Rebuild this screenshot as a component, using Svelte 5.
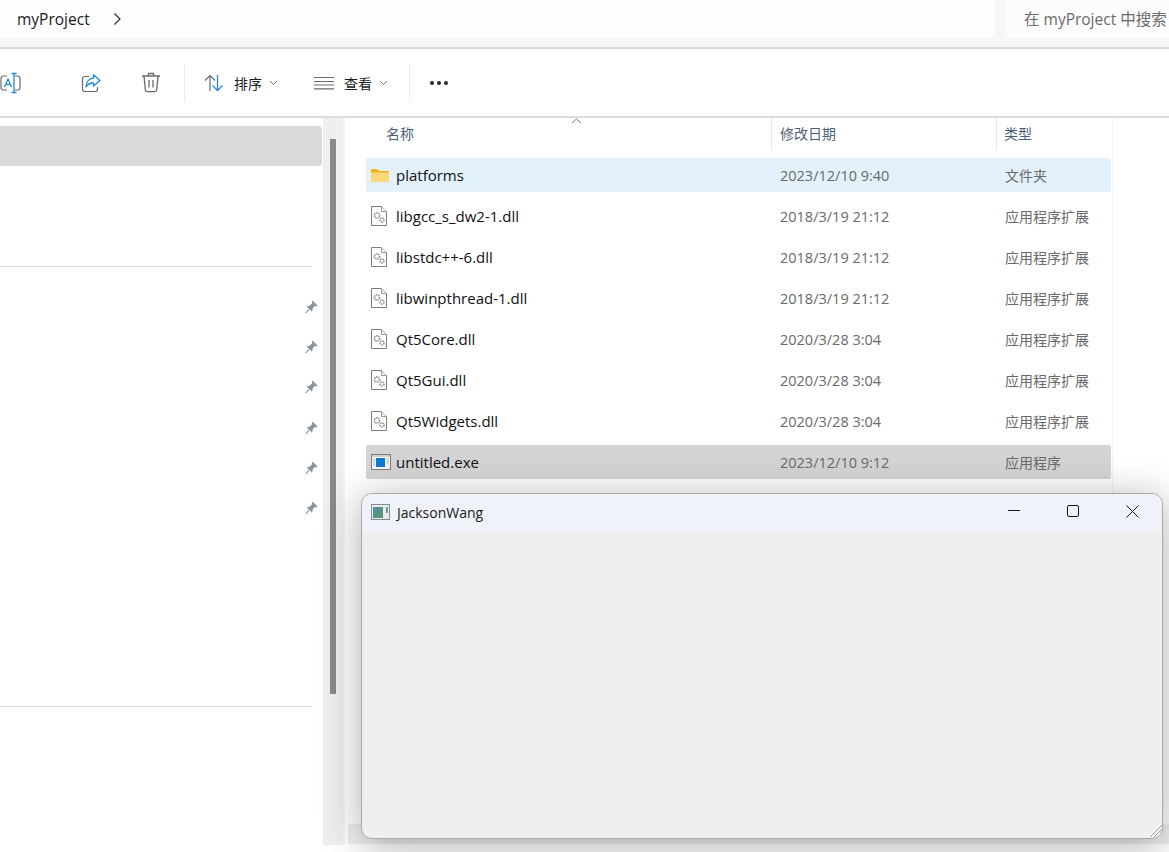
<script>
  const files = [
    { name: 'platforms', date: '2023/12/10 9:40', type: '文件夹', icon: 'folder', state: 'hover' },
    { name: 'libgcc_s_dw2-1.dll', date: '2018/3/19 21:12', type: '应用程序扩展', icon: 'dll' },
    { name: 'libstdc++-6.dll', date: '2018/3/19 21:12', type: '应用程序扩展', icon: 'dll' },
    { name: 'libwinpthread-1.dll', date: '2018/3/19 21:12', type: '应用程序扩展', icon: 'dll' },
    { name: 'Qt5Core.dll', date: '2020/3/28 3:04', type: '应用程序扩展', icon: 'dll' },
    { name: 'Qt5Gui.dll', date: '2020/3/28 3:04', type: '应用程序扩展', icon: 'dll' },
    { name: 'Qt5Widgets.dll', date: '2020/3/28 3:04', type: '应用程序扩展', icon: 'dll' },
    { name: 'untitled.exe', date: '2023/12/10 9:12', type: '应用程序', icon: 'exe', state: 'selected' },
  ];
  const pins = [0, 1, 2, 3, 4, 5];
</script>

{#snippet gear(cx, cy, r)}
  <circle {cx} {cy} r={r} fill="none" stroke="#8d8d8d" stroke-width="1.6" stroke-dasharray="1.4 0.8" />
{/snippet}

{#snippet chevron()}
  <svg class="chev" width="9" height="6" viewBox="0 0 9 6"><path d="M1 1l3.5 3.5L8 1" fill="none" stroke="#7a7a7a" /></svg>
{/snippet}

<div class="explorer">
  <header class="topbar">
    <div class="address">
      <span class="crumb">myProject</span>
      <svg class="crumb-sep" width="9" height="14" viewBox="0 0 9 14"><path d="M1.5 1.5L7 7l-5.500 5.500" fill="none" stroke="#2b2b2b" stroke-width="1.200" /></svg>
    </div>
    <div class="search">在 myProject 中搜索</div>
  </header>

  <div class="toolbar">
    <button class="tool first" aria-label="重命名">
      <svg width="22" height="22" viewBox="0 0 22 22">
        <path d="M7 4H3.500A2.500 2.500 0 0 0 1 6.500v9A2.500 2.500 0 0 0 3.500 18H7M15 4h2.500A2.500 2.500 0 0 1 20 6.500v9a2.500 2.500 0 0 1-2.500 2.500H15" fill="none" stroke="#6b6b6b" stroke-width="1.200" />
        <path d="M4.500 15L8 7l3.500 8M5.800 12.300h4.400" fill="none" stroke="#1e88e0" stroke-width="1.200" />
        <path d="M11.500 1.500h5M14 1.500v19M11.500 20.500h5" fill="none" stroke="#1e88e0" stroke-width="1.300" />
      </svg>
    </button>
    <button class="tool" aria-label="共享">
      <svg width="20" height="20" viewBox="0 0 20 20">
        <path d="M8 3.500H4A2.500 2.500 0 0 0 1.500 6v10A2.500 2.500 0 0 0 4 18.500h10a2.500 2.500 0 0 0 2.500-2.500v-2" fill="none" stroke="#6b6b6b" stroke-width="1.200" />
        <path d="M12.500 1.800L19 7.500l-6.500 5.500V10C9 10 6.500 11 5 14c0-5 3-8.500 7.500-9z" fill="none" stroke="#1e88e0" stroke-width="1.300" stroke-linejoin="round" />
      </svg>
    </button>
    <button class="tool" aria-label="删除">
      <svg width="20" height="21" viewBox="0 0 20 21">
        <path d="M1 4h18M7 4l.6-2.500h4.800L13 4M3 4l1.300 14a2 2 0 0 0 2 1.700h7.400a2 2 0 0 0 2-1.700L17 4M8 8v7.500M12 8v7.500" fill="none" stroke="#6b6b6b" stroke-width="1.300" />
      </svg>
    </button>
    <span class="divider"></span>
    <button class="menu sort">
      <svg width="20" height="18" viewBox="0 0 20 18">
        <path d="M6 17V1.500M1 6.500l5-5 5 5" fill="none" stroke="#6b6b6b" stroke-width="1.200" />
        <path d="M13.500 1v15.500M8.500 11.500l5 5 5-5" fill="none" stroke="#1e88e0" stroke-width="1.300" />
      </svg>
      <span class="menu-label">排序</span>
      {@render chevron()}
    </button>
    <button class="menu view">
      <svg width="20" height="14" viewBox="0 0 20 14">
        <path d="M0 1.500h20M0 5.500h20M0 9h20M0 12.800h20" fill="none" stroke="#6b6b6b" stroke-width="1.200" />
      </svg>
      <span class="menu-label">查看</span>
      {@render chevron()}
    </button>
    <span class="divider second"></span>
    <div class="dots"><i></i><i></i><i></i></div>
  </div>

  <div class="body">
    <aside class="nav">
      <div class="nav-selected"></div>
      <hr class="nav-line first-line" />
      <div class="pins">
        {#each pins as p}
          <svg class="pin" width="13" height="14" viewBox="0 0 13 14" data-pin={p}>
            <path d="M7.500 0.500L12.500 5.500 11 6.500 9.500 6 7.500 8.800 7.500 11 6.800 11.500 1.800 6.500 2.500 6 4.500 5.800 7 3.500 6.800 2z" fill="#8a949c" />
            <path d="M4 9L0.800 13" stroke="#8a949c" stroke-width="1.200" />
          </svg>
        {/each}
      </div>
      <hr class="nav-line" />
    </aside>

    <div class="nav-scroll"><div class="nav-thumb"></div></div>

    <main class="list">
      <div class="columns">
        <div class="col col-name">名称
          <svg class="sort-caret" width="11" height="6" viewBox="0 0 11 6"><path d="M1 5l4.500-4L10 5" fill="none" stroke="#7a7a7a" /></svg>
        </div>
        <div class="col col-date">修改日期</div>
        <div class="col col-type">类型</div>
      </div>
      <div class="rows">
        {#each files as f}
          <div class="row {f.state ?? ''}">
            <span class="file-icon">
              {#if f.icon === 'folder'}
                <svg width="18" height="14" viewBox="0 0 18 14">
                  <path d="M0 2a1 1 0 0 1 1-1h5l2 2h9a1 1 0 0 1 1 1v1H0z" fill="#f5b014" />
                  <path d="M0 4.500h18V13a1 1 0 0 1-1 1H1a1 1 0 0 1-1-1z" fill="#fdd878" />
                </svg>
              {:else if f.icon === 'dll'}
                <svg width="16" height="20" viewBox="0 0 16 20">
                  <path d="M.5.500h10l5 5v14H.5z" fill="#fff" stroke="#7d7d7d" />
                  <path d="M10.500.500v5h5" fill="#f2f2f2" stroke="#9a9a9a" />
                  {@render gear(6, 9.500, 2.600)}
                  {@render gear(11, 14, 2)}
                </svg>
              {:else}
                <svg width="20" height="16" viewBox="0 0 20 16">
                  <rect x=".5" y=".5" width="19" height="15" fill="#f4f4f4" stroke="#7d7d7d" />
                  <path d="M1 1h18v2H1z" fill="#d0d0d0" />
                  <rect x="5" y="4" width="9" height="9" fill="#0f78d0" />
                  <path d="M2 5h2M2 7h2M2 9h2M2 11h2M15.500 5h2.500M15.500 7h2.500M15.500 9h2.500" stroke="#b5b5b5" />
                </svg>
              {/if}
            </span>
            <span class="name">{f.name}</span>
            <span class="date">{f.date}</span>
            <span class="type">{f.type}</span>
          </div>
        {/each}
      </div>
    </main>
  </div>

  <div class="hscroll"></div>

  <section class="window">
    <div class="titlebar">
      <svg class="app-icon" width="19" height="16" viewBox="0 0 19 16">
        <defs>
          <linearGradient id="appfill" x1="0" y1="0" x2="1" y2="1">
            <stop offset="0" stop-color="#4f8fa0" />
            <stop offset="1" stop-color="#5d9a70" />
          </linearGradient>
        </defs>
        <rect x=".5" y=".5" width="18" height="15" fill="#e9ecef" stroke="#8a8a8a" />
        <rect x="2" y="3" width="10" height="11" fill="url(#appfill)" />
        <rect x="15" y="3" width="2" height="6" fill="#6f9a94" />
      </svg>
      <span class="title">JacksonWang</span>
      <div class="controls">
        <svg width="12" height="12" viewBox="0 0 12 12"><path d="M0 5.500h12" stroke="#1a1a1a" /></svg>
        <svg width="12" height="12" viewBox="0 0 12 12"><rect x=".5" y=".5" width="11" height="11" rx="1.500" fill="none" stroke="#1a1a1a" /></svg>
        <svg width="13" height="13" viewBox="0 0 13 13"><path d="M.5.500l12 12M12.500.500l-12 12" stroke="#1a1a1a" /></svg>
      </div>
    </div>
    <svg class="grip" width="14" height="14" viewBox="0 0 14 14">
      <path d="M13 1L1 13M13 5L5 13M13 9L9 13" stroke="#fff" stroke-width="1.500" />
      <path d="M14 1L2 13M14 5L6 13M14 9L10 13" stroke="#9a9a9a" />
    </svg>
  </section>
</div>

<style>
  :global(body) {
    margin: 0;
    background: #fff;
    font-family: "Open Sans", "Noto Sans CJK SC", sans-serif;
  }
  .explorer {
    position: relative;
    width: 1169px;
    height: 852px;
    overflow: hidden;
    background: #fff;
  }
  button {
    border: none;
    background: none;
    padding: 0;
    font: inherit;
    color: inherit;
  }

  .topbar {
    display: flex;
    gap: 10px;
    height: 48px;
    background: #f7f7f7;
    border-bottom: 2px solid #dcdcdc;
    box-sizing: content-box;
    height: 47px;
  }
  .address {
    width: 995px;
    height: 38px;
    background: #fdfdfd;
    border-radius: 0 0 5px 0;
    display: flex;
    align-items: center;
    padding-left: 17px;
    box-sizing: border-box;
  }
  .crumb {
    font-size: 15.500px;
    color: #1c1c1c;
  }
  .crumb-sep { margin-left: 23px; }
  .search {
    flex: 1;
    height: 38px;
    background: #fcfcfc;
    border-radius: 0 0 0 5px;
    padding-left: 19px;
    font-size: 15.500px;
    line-height: 38px;
    color: #6b6b6b;
    white-space: nowrap;
    overflow: hidden;
  }

  .toolbar {
    height: 67px;
    display: flex;
    align-items: center;
    border-bottom: 2px solid #dcdcdc;
  }
  .tool {
    width: 60px;
    display: flex;
    justify-content: center;
  }
  .tool.first {
    width: 22px;
    margin-right: 39px;
  }
  .divider {
    width: 1px;
    height: 38px;
    background: #ececec;
    margin-left: 3px;
  }
  .divider.second { margin-left: 21px; }
  .menu {
    display: flex;
    align-items: center;
  }
  .sort { margin-left: 19px; }
  .view { margin-left: 36px; }
  .menu-label {
    font-size: 14px;
    color: #1c1c1c;
    margin-left: 10px;
  }
  .chev { margin-left: 7px; }
  .dots {
    display: flex;
    gap: 3px;
    margin-left: 20px;
  }
  .dots i {
    width: 4px;
    height: 4px;
    border-radius: 50%;
    background: #2a2a2a;
  }

  .body {
    display: flex;
    height: 727px;
  }
  .nav {
    width: 323px;
    flex-shrink: 0;
    padding-top: 8px;
    box-sizing: border-box;
  }
  .nav-selected {
    width: 322px;
    height: 40px;
    background: #d9d9d9;
    border-radius: 0 4px 4px 0;
  }
  .nav-line {
    width: 312px;
    margin: 0;
    border: none;
    border-top: 1px solid #dadada;
  }
  .first-line { margin-top: 100px; }
  .pins {
    display: flex;
    flex-direction: column;
    gap: 26.200px;
    align-items: flex-end;
    height: 439px;
    padding: 33px 5px 0 0;
    box-sizing: border-box;
  }
  .nav-scroll {
    width: 20px;
    flex-shrink: 0;
    background: #efefef;
    padding-top: 21px;
    box-sizing: border-box;
  }
  .nav-thumb {
    width: 6px;
    height: 555px;
    margin-left: 7px;
    background: #8a8a8a;
  }

  .list {
    flex: 1;
    padding-left: 2px;
    position: relative;
  }
  .list::before {
    content: "";
    position: absolute;
    left: 0;
    top: 0;
    bottom: 0;
    width: 2px;
    background: #f4f4f4;
  }
  .list::after {
    content: "";
    position: absolute;
    left: 769px;
    top: 0;
    bottom: 0;
    width: 1px;
    background: #f2f2f2;
  }
  .columns {
    display: flex;
    height: 32px;
    margin-left: 21px;
    font-size: 14px;
    color: #4d5f75;
  }
  .col {
    line-height: 32px;
    box-sizing: border-box;
  }
  .col-name {
    position: relative;
    width: 406px;
    padding-left: 20px;
    border-right: 1px solid #e6e6e6;
  }
  .sort-caret {
    position: absolute;
    left: 205px;
    top: 0;
  }
  .col-date {
    width: 225px;
    padding-left: 8px;
    border-right: 1px solid #e6e6e6;
  }
  .col-type { padding-left: 7px; }
  .rows {
    display: flex;
    flex-direction: column;
    gap: 7px;
    margin: 8px 0 0 21px;
    width: 745px;
  }
  .row {
    display: flex;
    align-items: center;
    height: 34px;
    font-size: 14px;
    border-radius: 2px;
  }
  .row.hover { background: #e3f1fc; }
  .row.selected { background: #d4d4d4; }
  .file-icon {
    width: 30px;
    display: flex;
    justify-content: flex-start;
    padding-left: 5px;
    box-sizing: border-box;
    flex-shrink: 0;
  }
  .name {
    width: 384px;
    font-size: 15px;
    color: #111;
  }
  .date {
    width: 225px;
    color: #6a6a6a;
    font-size: 14.500px;
  }
  .type { color: #6a6a6a; }

  .hscroll {
    position: absolute;
    left: 348px;
    right: 0;
    top: 824px;
    height: 20px;
    background: #efefef;
  }

  .window {
    position: absolute;
    left: 361px;
    top: 493px;
    width: 802px;
    height: 346px;
    background: #efefef;
    border: 1px solid #ababab;
    box-sizing: border-box;
    border-radius: 11px;
    box-shadow: 0 6px 40px rgba(0, 0, 0, 0.32);
    overflow: hidden;
  }
  .titlebar {
    height: 37px;
    background: #eff2f9;
    display: flex;
    align-items: center;
    padding-left: 9px;
  }
  .app-icon { margin-top: -2px; }
  .title {
    margin-left: 7px;
    font-size: 14px;
    color: #1a1a1a;
  }
  .controls {
    margin-left: auto;
    display: flex;
    align-items: center;
    gap: 47px;
    padding-right: 23px;
    margin-top: -3px;
  }
  .grip {
    position: absolute;
    right: 0;
    bottom: 0;
  }
</style>
